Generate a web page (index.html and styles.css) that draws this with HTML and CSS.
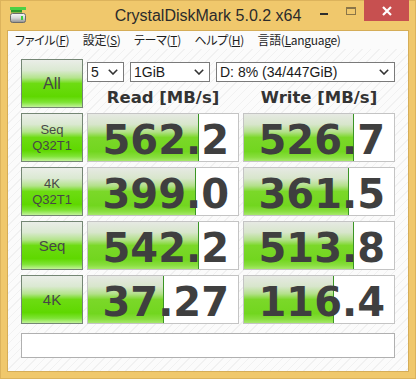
FILE: index.html
```html
<!DOCTYPE html>
<html lang="ja">
<head>
    <meta charset="UTF-8">
    <meta name="viewport" content="width=device-width, initial-scale=1.0">
    <title>CrystalDiskMark 5.0.2 x64</title>
    <link rel="stylesheet" href="styles.css">
</head>
<body>
    <div class="window">
        <header class="titlebar">
            <div class="titlebar__icon">
                <svg width="16" height="16" viewBox="0 0 16 16">
                    <defs>
                        <linearGradient id="disk" x1="0" y1="0" x2="0" y2="1">
                            <stop offset="0" stop-color="#f7f7f7"/>
                            <stop offset="0.5" stop-color="#d6d6d6"/>
                            <stop offset="1" stop-color="#8e8e8e"/>
                        </linearGradient>
                    </defs>
                    <rect x="0" y="0" width="16" height="3" fill="#4cd044"/>
                    <rect x="1" y="3" width="11" height="2.5" fill="#2c9a2c"/>
                    <rect x="0.5" y="6.5" width="15" height="9" rx="2" fill="url(#disk)" stroke="#6b6b6b"/>
                    <rect x="11" y="9" width="2" height="4" fill="#3fcf3f"/>
                </svg>
            </div>
            <span class="titlebar__title">CrystalDiskMark 5.0.2 x64</span>
            <div class="titlebar__buttons">
                <span class="win-button win-button--min">
                    <svg width="26" height="21" viewBox="0 0 26 21"><rect x="9" y="13" width="8" height="2" fill="#2e2e2e"/></svg>
                </span>
                <span class="win-button win-button--max">
                    <svg width="27" height="21" viewBox="0 0 27 21"><rect x="9.5" y="7.5" width="9" height="7" fill="none" stroke="#8a7548"/><rect x="9" y="7" width="10" height="2" fill="#8a7548"/></svg>
                </span>
                <span class="win-button win-button--close">
                    <svg width="45" height="21" viewBox="0 0 45 21"><path d="M19 7 L27 15 M27 7 L19 15" stroke="#fff" stroke-width="2.2"/></svg>
                </span>
            </div>
        </header>

        <div class="client">
            <nav class="menubar">
                <span class="menubar__item">ファイル(<u>F</u>)</span>
                <span class="menubar__item">設定(<u>S</u>)</span>
                <span class="menubar__item">テーマ(<u>T</u>)</span>
                <span class="menubar__item">ヘルプ(<u>H</u>)</span>
                <span class="menubar__item">言語(<u>L</u>anguage)</span>
            </nav>

            <div class="board">
                <button class="test-button test-button--all">All</button>
                <div class="board__top">
                    <div class="selects">
                        <div class="select select--count">5 <svg class="select__arrow" width="10" height="6" viewBox="0 0 10 6"><polyline points="0.8,0.8 5,5 9.2,0.8" fill="none" stroke="#333" stroke-width="1.6"/></svg></div>
                        <div class="select select--size">1GiB <svg class="select__arrow" width="10" height="6" viewBox="0 0 10 6"><polyline points="0.8,0.8 5,5 9.2,0.8" fill="none" stroke="#333" stroke-width="1.6"/></svg></div>
                        <div class="select select--drive">D: 8% (34/447GiB) <svg class="select__arrow" width="10" height="6" viewBox="0 0 10 6"><polyline points="0.8,0.8 5,5 9.2,0.8" fill="none" stroke="#333" stroke-width="1.6"/></svg></div>
                    </div>
                    <div class="headers">
                        <span>Read [MB/s]</span>
                        <span>Write [MB/s]</span>
                    </div>
                </div>

                <button class="test-button test-button--small">Seq<br>Q32T1</button>
                <div class="cell"><div class="cell__bar" style="width: 74%"></div><span class="cell__value">562.2</span></div>
                <div class="cell"><div class="cell__bar" style="width: 73.3%"></div><span class="cell__value">526.7</span></div>

                <button class="test-button test-button--small">4K<br>Q32T1</button>
                <div class="cell"><div class="cell__bar" style="width: 72%"></div><span class="cell__value">399.0</span></div>
                <div class="cell"><div class="cell__bar" style="width: 70%"></div><span class="cell__value">361.5</span></div>

                <button class="test-button">Seq</button>
                <div class="cell"><div class="cell__bar" style="width: 74%"></div><span class="cell__value">542.2</span></div>
                <div class="cell"><div class="cell__bar" style="width: 73.3%"></div><span class="cell__value">513.8</span></div>

                <button class="test-button">4K</button>
                <div class="cell"><div class="cell__bar" style="width: 50.7%"></div><span class="cell__value">37.27</span></div>
                <div class="cell"><div class="cell__bar" style="width: 60%"></div><span class="cell__value">116.4</span></div>

                <div class="comment"></div>
            </div>
        </div>
    </div>
</body>
</html>
```

FILE: styles.css
```css
html, body { margin: 0; padding: 0; }
body { background: #f0c86c; font-family: "Liberation Sans", Arial, sans-serif; }

.window { width: 416px; height: 379px; box-shadow: inset 0 0 0 1px #dcb35c; }

/* title bar */
.titlebar { height: 31px; display: grid; grid-template-columns: 1fr auto 1fr; }
.titlebar__icon { padding: 7px 0 0 10px; }
.titlebar__icon svg { display: block; }
.titlebar__title { font-size: 16px; line-height: 31px; color: #2b2b2b; }
.titlebar__buttons { justify-self: end; align-self: start; display: flex; margin-right: 7px; }
.win-button { display: block; height: 21px; }
.win-button svg { display: block; }
.win-button--close { background: #c75050; }

/* client area */
.client {
    margin: 0 8px;
    height: 340px;
    box-shadow: 0 0 0 1px #d5ad58;
    background: repeating-linear-gradient(135deg, #fbfbfb 0 5px, #f1f1f1 5px 6px);
}

.menubar { height: 18px; display: flex; background: #fbfbfb; font-family: "Noto Sans CJK JP", sans-serif; font-feature-settings: "palt"; font-size: 12px; letter-spacing: -0.3px; line-height: 18px; color: #1e1e1e; }
.menubar__item { padding: 0 6.5px 0 7px; }
.menubar__item u { text-underline-offset: 1px; }

.board {
    display: grid;
    grid-template-columns: 62px 152px 152px;
    grid-template-rows: repeat(5, 49px) 29px;
    gap: 5px 4px;
    padding: 10px 13px 0;
}

.test-button {
    margin: 0;
    padding: 0;
    border: 1px solid #748674;
    background: linear-gradient(to bottom, #eaeee8 0%, #dbe9d2 22%, #b4e48c 38%, #6ddc12 50%, #5fd800 78%, #7fe436 90%, #c2f29a 100%);
    font-family: "Liberation Sans", Arial, sans-serif;
    font-size: 15px;
    color: #474747;
    display: flex;
    align-items: center;
    justify-content: center;
    text-align: center;
}
.test-button--all { font-size: 16px; }
.test-button--small { font-size: 13px; line-height: 16px; }

.board__top { grid-column: 2 / 4; display: flex; flex-direction: column; }

.selects { display: flex; gap: 6px; margin-top: 3px; }
.select {
    height: 18px;
    border: 1px solid #7a7a7a;
    background: #fff;
    display: flex;
    align-items: center;
    padding-left: 3px;
    font-size: 14px;
    line-height: 18px;
    color: #1a1a1a;
}
.select__arrow { margin-left: auto; margin-right: 5px; }
.select--count { width: 32px; }
.select--size { width: 75px; }
.select--drive { flex: 1; }

.headers {
    display: grid;
    grid-template-columns: 152px 152px;
    gap: 4px;
    margin-top: 6px;
    font-family: "DejaVu Sans", sans-serif;
    font-weight: bold;
    font-size: 16.5px;
    line-height: 20px;
    text-align: center;
    color: #333;
}

/* result cells */
.cell { border: 1px solid #c4c4c4; background: #fff; display: grid; }
.cell__bar, .cell__value { grid-area: 1 / 1; }
.cell__bar {
    height: 100%;
    box-sizing: border-box;
    border-right: 1px solid #3a9524;
    background: linear-gradient(to bottom, #e6e9e3 0%, #d8e6cc 22%, #b3e08a 38%, #7bd829 50%, #72d61f 80%, #89de3f 92%, #a6e86a 100%);
}
.cell__value {
    justify-self: end;
    align-self: center;
    padding: 4px 9px 0 0;
    font-family: "DejaVu Sans", sans-serif;
    font-weight: bold;
    font-size: 40px;
    line-height: 1;
    color: #3f3f3f;
}

.comment { grid-column: 1 / 4; margin-top: 4px; border: 1px solid #b0b0b0; background: #fff; }
```
